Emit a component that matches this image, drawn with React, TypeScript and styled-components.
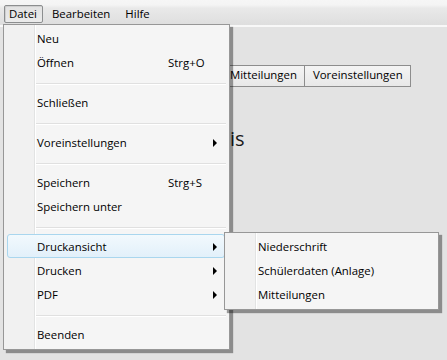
import React from "react";
import { styled, createGlobalStyle } from "styled-components";

const GlobalStyle = createGlobalStyle`
  html, body {
    margin: 0;
    padding: 0;
    background: #e3e3e3;
  }
  body {
    font-family: "Open Sans", "Noto Sans", "Liberation Sans", sans-serif;
    font-size: 11.4px;
    color: #000;
  }
`;

type Entry =
  | { kind: "item"; label: string; shortcut?: string; sub?: boolean; active?: boolean }
  | { kind: "sep" };

const fileMenu: Entry[] = [
  { kind: "item", label: "Neu" },
  { kind: "item", label: "Öffnen", shortcut: "Strg+O" },
  { kind: "sep" },
  { kind: "item", label: "Schließen" },
  { kind: "sep" },
  { kind: "item", label: "Voreinstellungen", sub: true },
  { kind: "sep" },
  { kind: "item", label: "Speichern", shortcut: "Strg+S" },
  { kind: "item", label: "Speichern unter" },
  { kind: "sep" },
  { kind: "item", label: "Druckansicht", sub: true, active: true },
  { kind: "item", label: "Drucken", sub: true },
  { kind: "item", label: "PDF", sub: true },
  { kind: "sep" },
  { kind: "item", label: "Beenden" },
];

const printMenu = ["Niederschrift", "Schülerdaten (Anlage)", "Mitteilungen"];

const App = () => {
  return (
    <Window>
      <GlobalStyle />
      <MenuBar>
        <BarItem $open>Datei</BarItem>
        <BarItem>Bearbeiten</BarItem>
        <BarItem>Hilfe</BarItem>
      </MenuBar>

      <Body>
        <TabStrip>
          <Tab>Mitteilungen</Tab>
          <Tab>Voreinstellungen</Tab>
        </TabStrip>
        <Heading>Ergebnis</Heading>
      </Body>

      <Dropdown>
        {fileMenu.map((e, i) =>
          e.kind === "sep" ? (
            <Separator key={i} />
          ) : (
            <Item key={i} $active={e.active}>
              <span />
              <Label>{e.label}</Label>
              <Shortcut>{e.shortcut}</Shortcut>
              {e.sub ? <Arrow /> : <span />}
            </Item>
          )
        )}
      </Dropdown>

      <SubMenu>
        {printMenu.map((label) => (
          <Item key={label}>
            <span />
            <Label>{label}</Label>
          </Item>
        ))}
      </SubMenu>
    </Window>
  );
};

const Window = styled.div`
  position: relative;
  width: 447px;
  height: 360px;
  overflow: hidden;
  background: #e3e3e3;
`;

const MenuBar = styled.div`
  display: flex;
  align-items: flex-start;
  gap: 4px;
  height: 27px;
  padding: 5px 0 0 4px;
  box-sizing: border-box;
  background: linear-gradient(
    #f6f6f6 0,
    #f4f4f4 5px,
    #e9e9e9 8px,
    #e0e0e0 22px,
    #dedede 26px,
    #dedede 27px
  );
  border-bottom: 2px solid #f8f8f8;
`;

const BarItem = styled.div<{ $open?: boolean }>`
  height: 18px;
  line-height: 16px;
  padding: 0 5px 0 4px;
  box-sizing: border-box;
  border: 1px solid ${(p) => (p.$open ? "#8c8e8f" : "transparent")};
  border-radius: 2px;
  background: ${(p) =>
    p.$open ? "linear-gradient(#e2e2e2, #ebebeb)" : "transparent"};
  box-shadow: ${(p) => (p.$open ? "inset 1px 1px 0 #cfcfcf" : "none")};
`;

const Body = styled.div`
  padding: 38px 0 0 221px;
`;

const TabStrip = styled.div`
  display: flex;
  height: 22px;
`;

const Tab = styled.div`
  height: 22px;
  line-height: 18px;
  padding: 0 7px 0 8px;
  box-sizing: border-box;
  border: 1px solid #8d8d8d;
  margin-right: -1px;
  background: linear-gradient(#f4f4f4, #e8e8e8);
`;

const Heading = styled.h1`
  margin: 38px 0 0 -57px;
  font-size: 20px;
  font-weight: 400;
  color: #1b1b1b;
`;

const Popup = styled.div`
  position: absolute;
  box-sizing: border-box;
  padding: 2px 0;
  border: 1px solid #979797;
  box-shadow: 3px 3px 1px rgba(0, 0, 0, 0.38);
  background: linear-gradient(
    to right,
    #f1f1f1 0 30px,
    #e2e3e3 30px 31px,
    #ffffff 31px 32px,
    #f5f5f5 32px
  );
`;

const Dropdown = styled(Popup)`
  left: 3px;
  top: 24px;
  width: 227px;
`;

const SubMenu = styled(Popup)`
  left: 224px;
  top: 232px;
  width: 215px;
`;

const Item = styled.div<{ $active?: boolean }>`
  position: relative;
  display: grid;
  grid-template-columns: 33px 131px 44px 1fr;
  align-items: center;
  height: 24px;
  line-height: 22px;

  &::before {
    content: "";
    display: ${(p) => (p.$active ? "block" : "none")};
    position: absolute;
    inset: -1px 4px 1px 3px;
    border: 1px solid #a9d6ee;
    border-radius: 3px;
    background: linear-gradient(#f2f9fd, #e2f0fa);
  }
`;

const Label = styled.span`
  position: relative;
  white-space: nowrap;
`;

const Shortcut = styled.span`
  position: relative;
  white-space: nowrap;
`;

const Arrow = styled.span`
  position: relative;
  width: 0;
  height: 0;
  margin-left: 1px;
  border-top: 4px solid transparent;
  border-bottom: 4px solid transparent;
  border-left: 4px solid #000;
`;

const Separator = styled.div`
  height: 16px;
  margin-left: 32px;
  margin-right: 3px;
  background: linear-gradient(
    transparent 0 8px,
    #e0e0e0 8px 9px,
    #ffffff 9px 10px,
    transparent 10px
  );
`;

export default App;
